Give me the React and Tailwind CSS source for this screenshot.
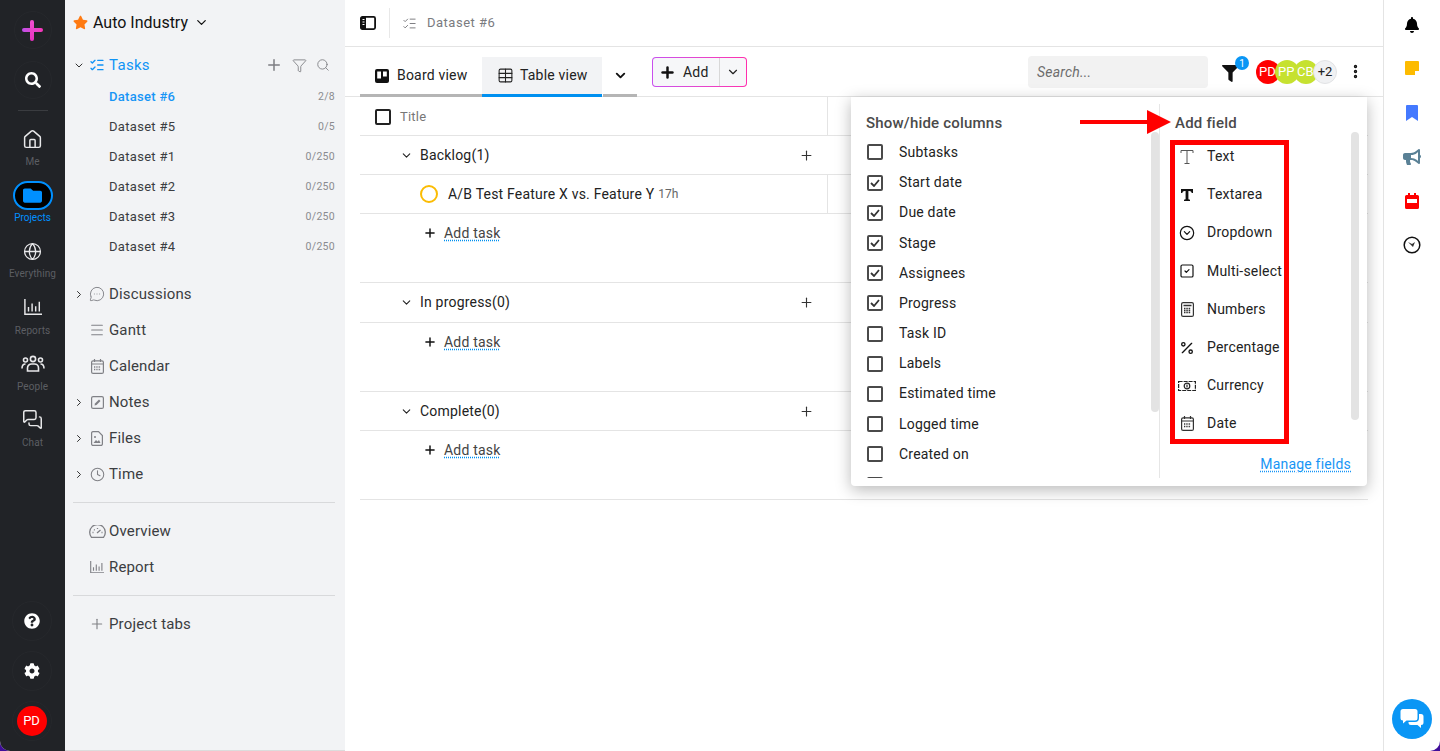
import {
  ChevronDown, ChevronRight, CircleChevronDown, Clock, EllipsisVertical, Funnel, Globe, House, ListChecks, Menu,
  MessageCircleMore, MessagesSquare, Percent, Plus, Search, SquareCheck, Table,
} from "lucide-react";
import { FaBell, FaBullhorn, FaCog, FaFilter, FaFolder, FaQuestionCircle, FaSearch, FaStar } from "react-icons/fa";

const datasets = [
  ["Dataset #6", "2/8"],
  ["Dataset #5", "0/5"],
  ["Dataset #1", "0/250"],
  ["Dataset #2", "0/250"],
  ["Dataset #3", "0/250"],
  ["Dataset #4", "0/250"],
];

const columns = [
  ["Subtasks", false],
  ["Start date", true],
  ["Due date", true],
  ["Stage", true],
  ["Assignees", true],
  ["Progress", true],
  ["Task ID", false],
  ["Labels", false],
  ["Estimated time", false],
  ["Logged time", false],
  ["Created on", false],
  ["Created by", false],
];

const TextIcon = () => (
  <svg width="16" height="16" viewBox="0 0 16 16" fill="none" stroke="#555" strokeWidth="1">
    <path d="M2 4V1.5h12V4M8 1.5v13M5.5 14.5h5" />
  </svg>
);

const TextareaIcon = () => (
  <svg width="14" height="14" viewBox="0 0 14 14" fill="#111">
    <path d="M1 1h12v4h-1.3c-.2-1.4-.8-2.1-2.4-2.1H8.4v8.4l1.6.4V13H4v-1.3l1.6-.4V2.9H4.7C3.1 2.9 2.5 3.6 2.3 5H1z" />
  </svg>
);

const CurrencyIcon = () => (
  <svg width="18" height="12" viewBox="0 0 18 12" fill="none" stroke="#222" strokeWidth="1.2">
    <rect x="0.6" y="1.5" width="16.8" height="9" strokeDasharray="4 1" />
    <circle cx="9" cy="6" r="2.8" />
    <path d="M9 4.5v3" />
  </svg>
);

const CalcIcon = () => (
  <svg width="13" height="15" viewBox="0 0 13 15" fill="none" stroke="#333" strokeWidth="1.2">
    <rect x="0.6" y="0.6" width="11.8" height="13.8" rx="1.5" />
    <path d="M2.5 3.5h8" strokeWidth="1.5" />
    <path d="M3 6.5h7M3 8.5h7M3 10.5h7" strokeWidth="1.3" strokeDasharray="1.5 .8" />
  </svg>
);

const DateIcon = ({ color = "#333" }) => (
  <svg width="13" height="15" viewBox="0 0 13 15" fill="none" stroke={color} strokeWidth="1.2">
    <rect x="0.6" y="1.8" width="11.8" height="12.6" rx="1.5" />
    <path d="M3.5 0v3M9.5 0v3M1 5h11" />
    <path d="M3 8h7M3 10.500h7" strokeWidth="1.3" strokeDasharray="1.3 1" />
  </svg>
);

const BarsIcon = ({ width = 18, color = "currentColor" }) => (
  <svg width={width} height={width * 0.9} viewBox="0 0 20 18" fill="none" stroke={color} strokeWidth="1.6">
    <path d="M1 0v17h19M5 14V9M9 14V5M13 14V8M17 14V3" />
  </svg>
);

const PeopleIcon = () => (
  <svg width="24" height="18" viewBox="0 0 24 18" fill="none" stroke="currentColor" strokeWidth="1.6">
    <circle cx="12" cy="4" r="2.6" />
    <circle cx="4.5" cy="5" r="2" />
    <circle cx="19.5" cy="5" r="2" />
    <path d="M6.5 16v-3a4 4 0 0 1 4-4h3a4 4 0 0 1 4 4v3zM1 13.5c0-3 1-4.500 3.500-4.500M23 13.500c0-3-1-4.500-3.500-4.500" />
  </svg>
);

const GaugeIcon = () => (
  <svg width="17" height="13" viewBox="0 0 17 13" fill="none" stroke="#808186" strokeWidth="1.3">
    <path d="M2.5 12.3a7.8 7.8 0 1 1 12 0z" />
    <path d="M8 8l3.5-3M3.5 7.5h1M5 4.5l.7.7M8.500 3v1M12.5 7.5h1" />
  </svg>
);

const NoteIcon = () => (
  <svg width="13" height="13" viewBox="0 0 13 13" fill="none" stroke="#808186" strokeWidth="1.2">
    <rect x="0.6" y="0.6" width="11.8" height="11.8" rx="1.5" />
    <path d="M3.5 9.5l.5-2L8 3.5l1.5 1.5-4 4z" fill="#808186" stroke="none" />
  </svg>
);

const FileIcon = () => (
  <svg width="12" height="15" viewBox="0 0 12 15" fill="none" stroke="#808186" strokeWidth="1.2">
    <path d="M1.5.6h6L11.4 4.5v8.4a1.5 1.5 0 0 1-1.5 1.5H2.1A1.5 1.5 0 0 1 .6 12.9V2.100A1.500 1.500 0 0 1 2.100.6z" />
    <circle cx="4" cy="6" r="1" fill="#808186" stroke="none" />
    <path d="M2.5 12l2.5-3 1.500 1.500L8 9l1.500 3z" fill="#808186" stroke="none" />
  </svg>
);

const fields = [
  ["Text", <TextIcon />],
  ["Textarea", <TextareaIcon />],
  ["Dropdown", <CircleChevronDown size={16} strokeWidth={1.8} className="text-[#111]" />],
  ["Multi-select", <SquareCheck size={16} strokeWidth={1.8} className="text-[#111]" />],
  ["Numbers", <CalcIcon />],
  ["Percentage", <Percent size={16} strokeWidth={2} className="text-[#111]" />],
  ["Currency", <CurrencyIcon />],
  ["Date", <DateIcon />],
];

const RailItem = ({ icon, label }) => (
  <div className="h-[56.2px] flex flex-col items-center">
    <div className="h-[30px] flex items-center justify-center text-[#e8e8ea]">{icon}</div>
    <span className="text-[10px] leading-[14px] mt-[1px] tracking-[0.1px] text-[#5c5e63]">{label}</span>
  </div>
);

const LeftRail = () => (
  <div className="w-[65px] shrink-0 bg-[#212327] flex flex-col items-center">
    <div className="mt-[11px] w-[38px] h-[38px] rounded-full border border-[#26282c] flex items-center justify-center">
      <div className="relative w-[21px] h-[21px]">
        <div className="absolute left-0 top-[8px] w-[21px] h-[4px] rounded-[2px] bg-gradient-to-r from-[#c04ee8] to-[#f934b8]" />
        <div className="absolute left-[8px] top-0 w-[4px] h-[21px] rounded-[2px] bg-gradient-to-b from-[#f050d0] to-[#e830c0]" />
      </div>
    </div>
    <div className="mt-[12px] w-[38px] h-[38px] rounded-full border border-[#26282c] flex items-center justify-center">
      <FaSearch size={16} className="text-white" />
    </div>
    <div className="mt-[11px] w-[30px] h-px bg-[#3a3c40]" />
    <div className="mt-[13px] w-full">
      <RailItem icon={<House size={21} strokeWidth={1.7} />} label="Me" />
      <div className="h-[56.2px] flex flex-col items-center">
        <div className="w-[40px] h-[29px] mt-[1px] rounded-full border-2 border-[#0090ff] bg-black flex items-center justify-center text-[#0090ff]">
          <FaFolder size={19} />
        </div>
        <span className="text-[10px] leading-[14px] mt-[1px] text-[#0090ff]">Projects</span>
      </div>
      <RailItem icon={<Globe size={19} strokeWidth={1.6} />} label="Everything" />
      <RailItem icon={<BarsIcon />} label="Reports" />
      <RailItem icon={<PeopleIcon />} label="People" />
      <RailItem icon={<MessagesSquare size={21} strokeWidth={1.7} />} label="Chat" />
    </div>
    <div className="mt-auto mb-[10px] mr-[2px] flex flex-col items-center">
      <div className="w-[40px] h-[40px] rounded-full border border-[#26282c] flex items-center justify-center text-white">
        <FaQuestionCircle size={16} />
      </div>
      <div className="mt-[10px] w-[40px] h-[40px] rounded-full border border-[#26282c] flex items-center justify-center text-white">
        <FaCog size={16} />
      </div>
      <div className="mt-[10px] w-[40px] h-[40px] rounded-full border border-[#26282c] flex items-center justify-center">
        <div className="w-[30px] h-[30px] rounded-full bg-[#ff0000] text-white text-[13px] flex items-center justify-center">PD</div>
      </div>
    </div>
  </div>
);

const SideRow = ({ arrow, icon, label }) => (
  <div className="h-[36px] flex items-center text-[15px] tracking-[0.15px] text-[#3b3d41]">
    <span className="w-[12px] flex justify-center text-[#333]">{arrow && <ChevronRight size={15} strokeWidth={2} />}</span>
    <span className="w-[20px] ml-[2px] flex justify-center text-[#808186]">{icon}</span>
    <span className="ml-[2px]">{label}</span>
  </div>
);

const Sidebar = () => (
  <div className="w-[280px] shrink-0 bg-[#f2f3f5] border-b border-[#dcdcdc] pl-[8px] pr-[10px]">
    <div className="h-[45px] flex items-center text-[16px] text-[#111]">
      <FaStar size={15} className="text-[#ff7a12]" />
      <span className="ml-[5px]">Auto Industry</span>
      <ChevronDown size={15} strokeWidth={2} className="ml-[6px]" />
    </div>
    <div className="mt-[5px] h-[30px] flex items-center">
      <span className="w-[12px] flex justify-center text-[#333]"><ChevronDown size={15} strokeWidth={2} /></span>
      <ListChecks size={16} strokeWidth={2} className="ml-[4px] text-[#0f93f5]" />
      <span className="ml-[4px] text-[15px] tracking-[0.3px] text-[#0f93f5]">Tasks</span>
      <div className="ml-auto mr-[5px] flex items-center gap-[9px] text-[#7d7e82]">
        <Plus size={18} strokeWidth={2} />
        <Funnel size={15} strokeWidth={1.4} />
        <Search size={14} strokeWidth={1.5} />
      </div>
    </div>
    <div className="mt-[2px]">
      {datasets.map(([name, count], i) => (
        <div key={name} className="h-[30px] pl-[36px] flex items-center justify-between">
          <span className={i === 0 ? "text-[13px] tracking-[0.3px] font-medium text-[#1795f5]" : "text-[13px] tracking-[0.3px] text-[#3b3d41]"}>{name}</span>
          <span className="text-[10.5px] tracking-[0.3px] text-[#8a8b8f]">{count}</span>
        </div>
      ))}
    </div>
    <div className="mt-[14px]">
      <SideRow arrow icon={<MessageCircleMore size={16} strokeWidth={1.4} />} label="Discussions" />
      <SideRow icon={<Menu size={16} strokeWidth={1.6} />} label="Gantt" />
      <SideRow icon={<DateIcon color="#808186" />} label="Calendar" />
      <SideRow arrow icon={<NoteIcon />} label="Notes" />
      <SideRow arrow icon={<FileIcon />} label="Files" />
      <SideRow arrow icon={<Clock size={15} strokeWidth={1.7} />} label="Time" />
    </div>
    <div className="mt-[10px] h-px bg-[#d8d9db]" />
    <div className="mt-[10px]">
      <SideRow icon={<GaugeIcon />} label="Overview" />
      <SideRow icon={<BarsIcon width={14} color="#808186" />} label="Report" />
    </div>
    <div className="mt-[10px] h-px bg-[#d8d9db]" />
    <div className="mt-[10px]">
      <SideRow icon={<Plus size={16} strokeWidth={1.7} />} label="Project tabs" />
    </div>
  </div>
);

const TopBar = () => (
  <div className="h-[47px] border-b border-[#e4e4e4] pl-[15px] flex items-center">
    <svg width="16" height="14" viewBox="0 0 16 14" fill="none">
      <rect x="0.9" y="0.9" width="14.2" height="12.2" rx="1.5" stroke="#111" strokeWidth="1.8" />
      <path d="M1 1h5v12H1z" fill="#111" />
      <path d="M2.5 3.5h2M2.5 6h2M2.5 8.5h2" stroke="#fff" />
    </svg>
    <div className="ml-[13px] w-px h-[30px] bg-[#e8e8e8]" />
    <ListChecks size={15} strokeWidth={1.5} className="ml-[12px] text-[#77787c]" />
    <span className="ml-[10px] mb-[1px] text-[13px] tracking-[0.5px] text-[#7a7b7f]">Dataset #6</span>
  </div>
);

const Toolbar = () => (
  <div className="h-[50px] border-b border-[#e4e4e4] pl-[15px] pr-[15px] flex items-start">
    <div className="mt-[10px] w-[122px] h-[40px] border-b-[3px] border-[#b5b5b5] flex items-center pl-[15px] text-[14px] tracking-[0.2px] text-[#222]">
      <svg width="14" height="14" viewBox="0 0 14 14">
        <path d="M2 0h10a2 2 0 0 1 2 2v10a2 2 0 0 1-2 2H2a2 2 0 0 1-2-2V2a2 2 0 0 1 2-2z" fill="#111" />
        <path d="M2.2 2.5H6v7H2.2zM8 2.5h3.8v5H8z" fill="#fff" />
      </svg>
      <span className="ml-[8px]">Board view</span>
    </div>
    <div className="mt-[10px] w-[120px] h-[40px] bg-[#f2f3f5] border-b-[3px] border-[#0090f0] flex items-center pl-[15px] text-[14px] tracking-[0.2px] text-[#222]">
      <Table size={17} strokeWidth={1.5} />
      <span className="ml-[6px]">Table view</span>
    </div>
    <div className="mt-[10px] ml-[1px] w-[34px] h-[40px] border-b-[3px] border-[#b5b5b5] flex items-center justify-center">
      <ChevronDown size={15} strokeWidth={3} className="text-[#111]" />
    </div>
    <div className="mt-[10px] ml-[15px] w-[95px] h-[30px] rounded-[4px] bg-gradient-to-r from-[#c850ee] to-[#ff2ead] p-px">
      <div className="w-full h-full rounded-[3px] bg-[#f6f7f9] flex items-center text-[14px] tracking-[0.2px] text-[#222]">
        <Plus size={17} strokeWidth={3.5} className="ml-[6px] text-[#111]" />
        <span className="ml-[7px]">Add</span>
        <div className="ml-[10px] w-px h-full bg-[#d8d8d8]" />
        <ChevronDown size={14} strokeWidth={2} className="ml-[6px]" />
      </div>
    </div>
    <div className="mt-[9px] ml-auto w-[180px] h-[32px] rounded-[4px] bg-[#f2f2f2] pl-[9px] flex items-center text-[14px] italic tracking-[0.2px] text-[#6d6d6d]">Search...</div>
    <div className="relative mt-[18px] ml-[14px] w-[18px] text-[#111]">
      <FaFilter size={17} />
      <div className="absolute left-[13px] top-[-9px] w-[14px] h-[14px] rounded-full bg-[#0a96f5] text-white text-[10px] flex items-center justify-center">1</div>
    </div>
    <div className="mt-[13px] ml-[16px] flex text-[13px] text-white">
      <div className="w-[24px] h-[24px] rounded-full bg-[#ff0000] flex items-center pl-[3px] overflow-hidden">PD</div>
      <div className="ml-[-5px] w-[24px] h-[24px] rounded-full bg-[#c6e130] flex items-center pl-[3px] overflow-hidden">PP</div>
      <div className="ml-[-5px] w-[24px] h-[24px] rounded-full bg-[#c6e130] flex items-center pl-[3px] overflow-hidden">CB</div>
      <div className="ml-[-5px] w-[24px] h-[24px] rounded-full bg-[#f0f1f3] border border-[#e2e3e5] flex items-center justify-center text-[#222]">+2</div>
    </div>
    <EllipsisVertical size={17} strokeWidth={2.8} className="mt-[16px] ml-[10px] mr-[4px] text-[#111]" />
  </div>
);

const GroupHeader = ({ label, tall }) => (
  <div className={tall ? "h-[40px] border-b border-[#e4e4e4] flex items-center" : "h-[39px] border-b border-[#e4e4e4] flex items-center"}>
    <ChevronDown size={13} strokeWidth={2} className="ml-[40px] text-[#222]" />
    <span className="ml-[7px] text-[14px] tracking-[0.2px] text-[#222]">{label}</span>
    <Plus size={15} strokeWidth={1.8} className="ml-auto mr-[554px] text-[#333]" />
  </div>
);

const AddTask = () => (
  <div className="h-[69px] border-b border-[#e4e4e4] pl-[63px] pt-[9px] flex items-start">
    <div className="flex items-center h-[20px] text-[14px] tracking-[0.2px] text-[#444]">
      <Plus size={14} strokeWidth={2.5} className="text-[#111]" />
      <span className="ml-[7px] underline decoration-dotted decoration-[#0090f0] underline-offset-2">Add task</span>
    </div>
  </div>
);

const TaskTable = () => (
  <div className="mx-[15px]">
    <div className="h-[39px] border-b border-[#e4e4e4] flex items-center">
      <div className="ml-[15px] mt-px w-[16px] h-[16px] rounded-[2px] border-2 border-[#222]" />
      <span className="ml-[9px] mt-px text-[13px] tracking-[0.2px] text-[#777]">Title</span>
      <div className="ml-[401px] w-px h-full bg-[#e4e4e4]" />
    </div>
    <GroupHeader label="Backlog(1)" />
    <div className="h-[39px] border-b border-[#e4e4e4] flex items-center">
      <div className="ml-[60px] w-[18px] h-[18px] rounded-full border-2 border-[#fbbc04]" />
      <span className="ml-[10px] text-[14px] tracking-[0.2px] text-[#222]">A/B Test Feature X vs. Feature Y</span>
      <span className="ml-[4px] text-[12px] text-[#666]">17h</span>
      <div className="ml-[149px] w-px h-full bg-[#e4e4e4]" />
    </div>
    <AddTask />
    <GroupHeader label="In progress(0)" tall />
    <AddTask />
    <GroupHeader label="Complete(0)" />
    <AddTask />
  </div>
);

const FieldMenu = () => (
  <div className="absolute left-[506px] top-[97px] w-[516px] h-[389px] bg-white rounded-b-[4px] shadow-[0_4px_16px_rgba(0,0,0,0.28)] flex text-[14px] tracking-[0.2px] text-[#222]">
    <div className="relative w-[308px] h-[381px] overflow-hidden">
      <div className="pl-[15px] pt-[17px] h-[40.4px] text-[15px] font-medium text-[#4a4a4a] leading-[18px]">Show/hide columns</div>
      {columns.map(([name, on]) => (
        <div key={name} className="h-[30.2px] pl-[16px] flex items-center">
          <div className="w-[16px] h-[16px] rounded-[2px] border-2 border-[#4a4a4a] flex items-center justify-center">
            {on && (
              <svg width="10" height="8" viewBox="0 0 10 8" fill="none" stroke="#333" strokeWidth="1.8">
                <path d="M1 4l3 3 5-6" />
              </svg>
            )}
          </div>
          <span className="ml-[16px]">{name}</span>
        </div>
      ))}
      <div className="absolute left-[300px] top-[35px] w-[8px] h-[280px] rounded-full bg-[#e3e3e3]" />
    </div>
    <div className="relative mt-[7px] w-[208px] h-[374px] border-l border-[#e6e6e6]">
      <div className="pl-[15px] pt-[10px] h-[33.5px] text-[15px] font-medium text-[#4a4a4a] leading-[18px]">Add field</div>
      {fields.map(([name, icon]) => (
        <div key={name} className="h-[38.2px] flex items-center">
          <span className="ml-[17px] w-[20px] flex justify-center">{icon}</span>
          <span className="ml-[10px]">{name}</span>
        </div>
      ))}
      <div className="absolute left-[191px] top-[28px] w-[8px] h-[288px] rounded-full bg-[#e3e3e3]" />
      <div className="absolute right-[16px] top-[350px] text-[#1795f5] underline decoration-dotted underline-offset-2">Manage fields</div>
    </div>
  </div>
);

const Annotations = () => (
  <>
    <div className="absolute left-[735px] top-[120px] w-[70px] h-[4px] bg-[#ff0000]" />
    <svg className="absolute left-[802px] top-[110px]" width="24" height="24" viewBox="0 0 24 24">
      <path d="M0 0l24 12L0 24z" fill="#ff0000" />
    </svg>
    <div className="absolute left-[825px] top-[140px] w-[119px] h-[304px] border-[5px] border-[#ff0000]" />
  </>
);

const RightRail = () => (
  <div className="w-[57px] shrink-0 border-l border-[#e4e4e4] flex flex-col items-center pt-[16px]">
    <div className="h-[44px] flex justify-center"><FaBell size={16} className="text-black mt-[1px]" /></div>
    <div className="h-[44px] flex justify-center">
      <div className="relative w-[14px] h-[14px] mt-[1px] rounded-[1px] bg-[#fdbb00]">
        <div className="absolute right-0 bottom-0 w-[4px] h-[4px] bg-white" />
      </div>
    </div>
    <div className="h-[44px] flex justify-center">
      <svg width="12" height="16" viewBox="0 0 12 16" className="mt-[1px]"><path d="M1 0h10a1 1 0 0 1 1 1v15l-6-4-6 4V1a1 1 0 0 1 1-1z" fill="#4479ff" /></svg>
    </div>
    <div className="h-[44px] flex justify-center"><FaBullhorn size={18} className="text-[#5a8196]" /></div>
    <div className="h-[44px] flex justify-center">
      <svg width="14" height="16" viewBox="0 0 14 16" className="mt-[1px]">
        <path d="M3 0h2v2h4V0h2v2h1.5A1.5 1.5 0 0 1 14 3.5v11a1.5 1.5 0 0 1-1.5 1.5h-11A1.5 1.5 0 0 1 0 14.5v-11A1.5 1.5 0 0 1 1.5 2H3z" fill="#ff0000" />
        <path d="M2 6h10v4H2z" fill="#fff" />
      </svg>
    </div>
    <div className="h-[44px] flex justify-center">
      <svg width="18" height="18" viewBox="0 0 18 18" fill="none">
        <circle cx="9" cy="9" r="7.8" stroke="#111" strokeWidth="1.5" />
        <path d="M5 6l4 2 3-2-2 5z" fill="#333" />
      </svg>
    </div>
    <div className="mt-auto mb-[12px] w-[40px] h-[40px] rounded-full bg-[#0a96f5] flex items-center justify-center">
      <svg width="24" height="22" viewBox="0 0 24 22" fill="#fff">
        <path d="M3 1h12a2.5 2.5 0 0 1 2.5 2.5V10a2.5 2.5 0 0 1-2.5 2.5H6.5L3 15.5v-3A2.5 2.5 0 0 1 .5 10V3.5A2.5 2.5 0 0 1 3 1z" />
        <path d="M19 6h2a2.5 2.5 0 0 1 2.5 2.5v6A2.5 2.5 0 0 1 21 17v3l-3.5-3H11a2.5 2.5 0 0 1-2.5-2.500V14H15a4 4 0 0 0 4-4z" />
      </svg>
    </div>
  </div>
);

export default function App() {
  return (
    <div className="w-[1440px] h-[751px] bg-[#3f0d9a] overflow-hidden font-['Roboto',sans-serif]">
      <div className="w-full h-full flex bg-white rounded-b-[10px] overflow-hidden">
        <LeftRail />
        <Sidebar />
        <div className="relative flex-1 min-w-0">
          <TopBar />
          <Toolbar />
          <TaskTable />
          <FieldMenu />
          <Annotations />
        </div>
        <RightRail />
      </div>
    </div>
  );
}
